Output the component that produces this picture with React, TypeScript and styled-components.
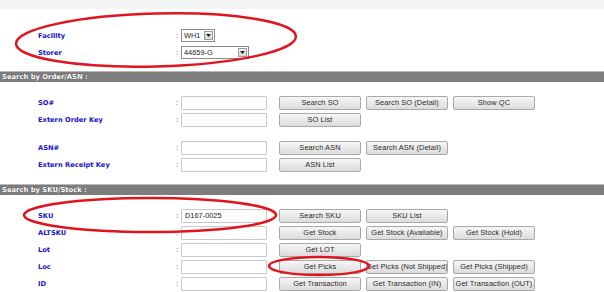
import React from "react";
import styled, { createGlobalStyle } from "styled-components";

const GlobalStyle = createGlobalStyle`
  html, body {
    margin: 0;
    padding: 0;
    background: #ffffff;
  }
  body {
    width: 604px;
    height: 292px;
    overflow: hidden;
    font-family: "Liberation Sans", Arial, sans-serif;
  }
`;

interface FieldRow {
  label: string;
  value?: string;
  buttons: string[];
}

const orderRows: FieldRow[][] = [
  [
    { label: "SO#", buttons: ["Search SO", "Search SO (Detail)", "Show QC"] },
    { label: "Extern Order Key", buttons: ["SO List"] },
  ],
  [
    { label: "ASN#", buttons: ["Search ASN", "Search ASN (Detail)"] },
    { label: "Extern Receipt Key", buttons: ["ASN List"] },
  ],
];

const stockRows: FieldRow[] = [
  { label: "SKU", value: "D167-0025", buttons: ["Search SKU", "SKU List"] },
  {
    label: "ALTSKU",
    buttons: ["Get Stock", "Get Stock (Available)", "Get Stock (Hold)"],
  },
  { label: "Lot", buttons: ["Get LOT"] },
  {
    label: "Loc",
    buttons: ["Get Picks", "Get Picks (Not Shipped)", "Get Picks (Shipped)"],
  },
  {
    label: "ID",
    buttons: [
      "Get Transaction",
      "Get Transaction (IN)",
      "Get Transaction (OUT)",
    ],
  },
];

const Row = (props: FieldRow) => {
  const { label, value, buttons } = props;
  return (
    <RowWrap>
      <Label>{label}</Label>
      <Colon>:</Colon>
      <TextBox>{value}</TextBox>
      <Buttons>
        {buttons.map((b) => (
          <Button key={b}>
            <span>{b}</span>
          </Button>
        ))}
      </Buttons>
    </RowWrap>
  );
};

const Arrow = () => (
  <ArrowBox>
    <svg width="5" height="3" viewBox="0 0 5 3">
      <path d="M0 0 L5 0 L2.5 3 Z" fill="#222" />
    </svg>
  </ArrowBox>
);

export default function App() {
  return (
    <Page>
      <GlobalStyle />
      <TopStrip />
      <Settings>
        <RowWrap>
          <Label>Facility</Label>
          <Colon>:</Colon>
          <Select $width={34}>
            <SelectText>WH1</SelectText>
            <Arrow />
          </Select>
        </RowWrap>
        <RowWrap>
          <Label>Storer</Label>
          <Colon>:</Colon>
          <Select $width={68}>
            <SelectText>44659-G</SelectText>
            <Arrow />
          </Select>
        </RowWrap>
      </Settings>

      <SectionBar>Search by Order/ASN :</SectionBar>
      <Section>
        {orderRows.map((group, i) => (
          <Group key={i}>
            {group.map((r) => (
              <Row key={r.label} {...r} />
            ))}
          </Group>
        ))}
      </Section>

      <SectionBar>Search by SKU/Stock :</SectionBar>
      <Section>
        <Group>
          {stockRows.map((r) => (
            <Row key={r.label} {...r} />
          ))}
        </Group>
      </Section>

      <Marks width="604" height="292" viewBox="0 0 604 292">
        <ellipse
          cx="156"
          cy="40"
          rx="140"
          ry="26.5"
          transform="rotate(-1.5 156 40)"
        />
        <ellipse cx="150" cy="215" rx="126" ry="17" />
        <ellipse cx="319" cy="266" rx="50" ry="9" />
      </Marks>
    </Page>
  );
}

const Page = styled.div`
  position: relative;
  width: 604px;
  height: 292px;
  overflow: hidden;
  background: #ffffff;
`;

const TopStrip = styled.div`
  height: 9px;
  background: #f4f5f6;
`;

const Settings = styled.div`
  padding-top: 18px;
  padding-bottom: 10px;
`;

const RowWrap = styled.div`
  display: flex;
  align-items: center;
  height: 17px;
  padding-left: 38px;
`;

const Label = styled.div`
  width: 138px;
  flex: none;
  font-family: "DejaVu Sans", Verdana, sans-serif;
  font-weight: bold;
  font-size: 6.7px;
  color: #1414cc;
  white-space: nowrap;
`;

const Colon = styled.div`
  width: 5px;
  flex: none;
  font-size: 8px;
  color: #555;
  line-height: 1;
`;

const Select = styled.div<{ $width: number }>`
  display: flex;
  align-items: center;
  justify-content: space-between;
  box-sizing: border-box;
  width: ${(p) => p.$width}px;
  height: 13px;
  border: 1px solid #8a8a8a;
  background: #fff;
  padding: 0 1px 0 2px;
`;

const SelectText = styled.span`
  font-size: 7.4px;
  color: #222;
`;

const ArrowBox = styled.div`
  display: flex;
  align-items: center;
  justify-content: center;
  width: 9px;
  height: 9px;
  box-sizing: border-box;
  border: 1px solid #9a9a9a;
  background: linear-gradient(#f2f2f2, #d6d6d6);
`;

const SectionBar = styled.div`
  height: 10px;
  line-height: 10px;
  background: #7d7d7d;
  border-top: 1px solid #b8b8b8;
  padding-left: 2px;
  font-family: "DejaVu Sans", Verdana, sans-serif;
  font-weight: bold;
  font-size: 6.8px;
  color: #ffffff;
  text-shadow: 0 0 1px #444;
  white-space: nowrap;
`;

const Section = styled.div`
  display: flex;
  flex-direction: column;
  gap: 11px;
  padding-top: 12px;
  padding-bottom: 11px;
`;

const Group = styled.div`
  display: flex;
  flex-direction: column;
`;

const TextBox = styled.div`
  box-sizing: border-box;
  width: 86px;
  height: 14px;
  flex: none;
  border: 1px solid #c9c9c9;
  border-radius: 1px;
  background: #fff;
  padding-left: 3px;
  font-size: 7.4px;
  line-height: 12px;
  color: #222;
`;

const Buttons = styled.div`
  display: flex;
  gap: 5px;
  margin-left: 12px;
`;

const Button = styled.div`
  display: flex;
  align-items: center;
  justify-content: center;
  box-sizing: border-box;
  width: 82px;
  height: 14px;
  border: 1px solid #a9a9a9;
  border-radius: 2px;
  background: linear-gradient(#f6f6f6, #dcdcdc);
  overflow: hidden;
  span {
    flex: none;
    white-space: nowrap;
    font-size: 7.4px;
    letter-spacing: 0.1px;
    color: #2a2a2a;
  }
`;

const Marks = styled.svg`
  position: absolute;
  left: 0;
  top: 0;
  pointer-events: none;
  ellipse {
    fill: none;
    stroke: #e0141e;
    stroke-width: 2.5;
  }
`;
